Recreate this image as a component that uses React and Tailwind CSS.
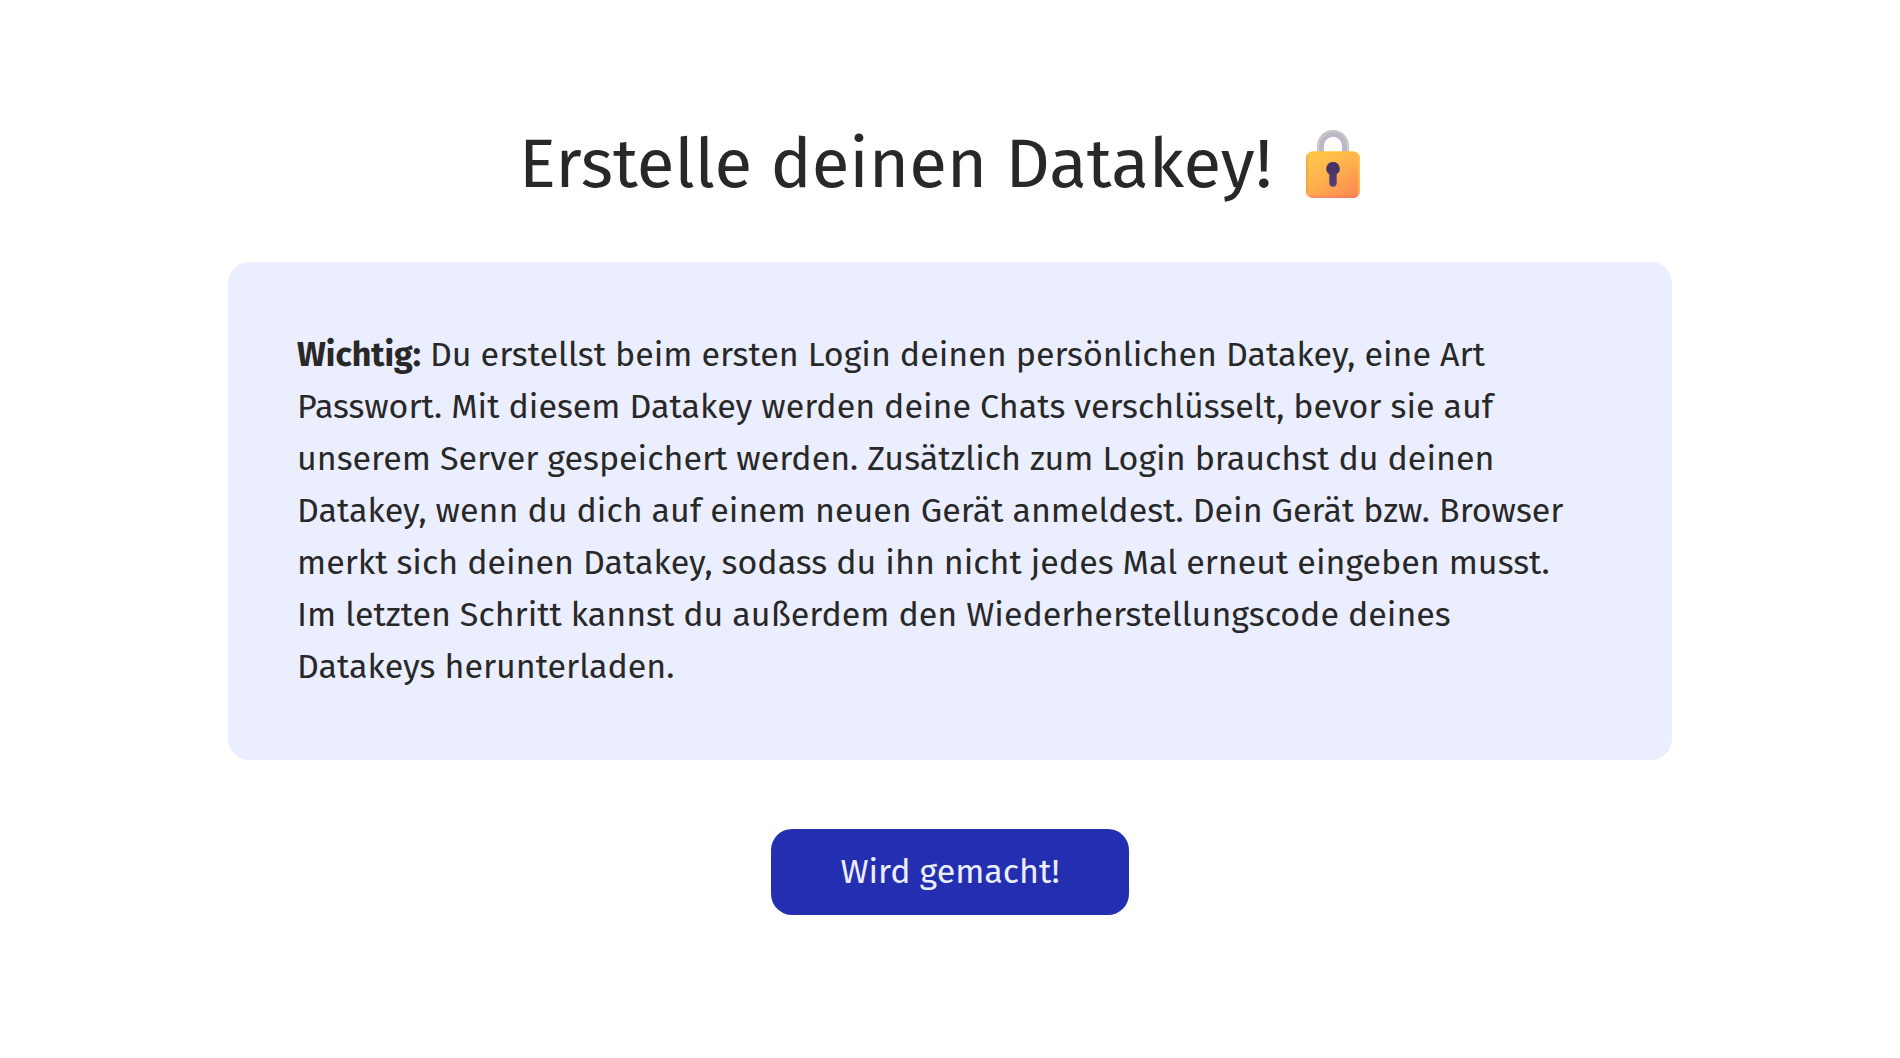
const LockIcon = () => {
  return (
    <svg viewBox="0 0 54 68" className="w-[54px] h-[68px] shrink-0" role="img" aria-label="Schloss">
      <defs>
        <linearGradient id="lockBody" x1="6" y1="20" x2="40" y2="72" gradientUnits="userSpaceOnUse">
          <stop offset="0" stopColor="#FFCB48" />
          <stop offset="0.5" stopColor="#FFB04E" />
          <stop offset="1" stopColor="#FC8652" />
        </linearGradient>
        <linearGradient id="lockLeft" x1="0" y1="0" x2="3" y2="0" gradientUnits="userSpaceOnUse">
          <stop offset="0" stopColor="#D99A45" stopOpacity="0.7" />
          <stop offset="1" stopColor="#D99A45" stopOpacity="0" />
        </linearGradient>
        <linearGradient id="lockRight" x1="54" y1="0" x2="51" y2="0" gradientUnits="userSpaceOnUse">
          <stop offset="0" stopColor="#FFD24F" stopOpacity="0.8" />
          <stop offset="1" stopColor="#FFD24F" stopOpacity="0" />
        </linearGradient>
        <linearGradient id="lockTop" x1="0" y1="21" x2="0" y2="24" gradientUnits="userSpaceOnUse">
          <stop offset="0" stopColor="#FFC021" />
          <stop offset="1" stopColor="#FFC021" stopOpacity="0" />
        </linearGradient>
        <linearGradient id="lockBottom" x1="0" y1="68" x2="0" y2="65" gradientUnits="userSpaceOnUse">
          <stop offset="0" stopColor="#F56D70" stopOpacity="0.6" />
          <stop offset="1" stopColor="#F56D70" stopOpacity="0" />
        </linearGradient>
        <linearGradient id="lockHole" x1="27" y1="33" x2="27" y2="57" gradientUnits="userSpaceOnUse">
          <stop offset="0" stopColor="#403063" />
          <stop offset="1" stopColor="#554076" />
        </linearGradient>
      </defs>
      <path d="M14.3 25V16a12.7 12.7 0 0 1 25.4 0v9" fill="none" stroke="#BDBABF" strokeWidth="6.4" />
      <path d="M17 24V16a10 10 0 0 1 20 0v8" fill="none" stroke="#C2AED2" strokeWidth="1.6" />
      <path d="M12.4 24V16a14.6 14.6 0 0 1 29.2 0v8" fill="none" stroke="#CCCACE" strokeWidth="1.4" />
      <rect y="21.5" width="54" height="46.5" rx="6.5" fill="url(#lockBody)" />
      <rect y="21.5" width="54" height="46.5" rx="6.5" fill="url(#lockLeft)" />
      <rect y="21.5" width="54" height="46.5" rx="6.5" fill="url(#lockRight)" />
      <rect y="21.5" width="54" height="46.5" rx="6.5" fill="url(#lockTop)" />
      <rect y="21.5" width="54" height="46.5" rx="6.5" fill="url(#lockBottom)" />
      <path
        d="M27 32a6.7 6.7 0 0 1 3.7 12.3v8.7a3.7 3.7 0 0 1-7.4 0v-8.7A6.7 6.7 0 0 1 27 32Z"
        fill="url(#lockHole)"
      />
    </svg>
  );
};

const App = () => {
  return (
    <main className="min-h-screen bg-white text-[#282828] font-['Fira_Sans','Noto_Sans',sans-serif] flex flex-col items-center px-[12%] pt-28 pb-20">
      <h1 className="flex items-center gap-[34px] pr-[21px] text-[69px] leading-[104px]">
        Erstelle deinen Datakey!
        <LockIcon />
      </h1>

      <section className="mt-[46px] w-full rounded-[21px] bg-[#EBEEFF] pl-[69px] pr-20 py-[67px]">
        <p className="text-[34px] leading-[52px]">
          <strong className="font-bold">Wichtig:</strong> Du erstellst beim ersten Login deinen
          persönlichen Datakey, eine Art Passwort. Mit diesem Datakey werden deine Chats
          verschlüsselt, bevor sie auf unserem Server gespeichert werden. Zusätzlich zum Login
          brauchst du deinen Datakey, wenn du dich auf einem neuen Gerät anmeldest. Dein Gerät bzw.
          Browser merkt sich deinen Datakey, sodass du ihn nicht jedes Mal erneut eingeben musst. Im
          letzten Schritt kannst du außerdem den Wiederherstellungscode deines Datakeys
          herunterladen.
        </p>
      </section>

      <button
        type="button"
        className="mt-[69px] rounded-[21px] bg-[#232FB0] px-[69px] py-[17px] text-[34px] leading-[52px] text-[#EBEEFF] cursor-pointer"
      >
        Wird gemacht!
      </button>
    </main>
  );
};

export default App;
